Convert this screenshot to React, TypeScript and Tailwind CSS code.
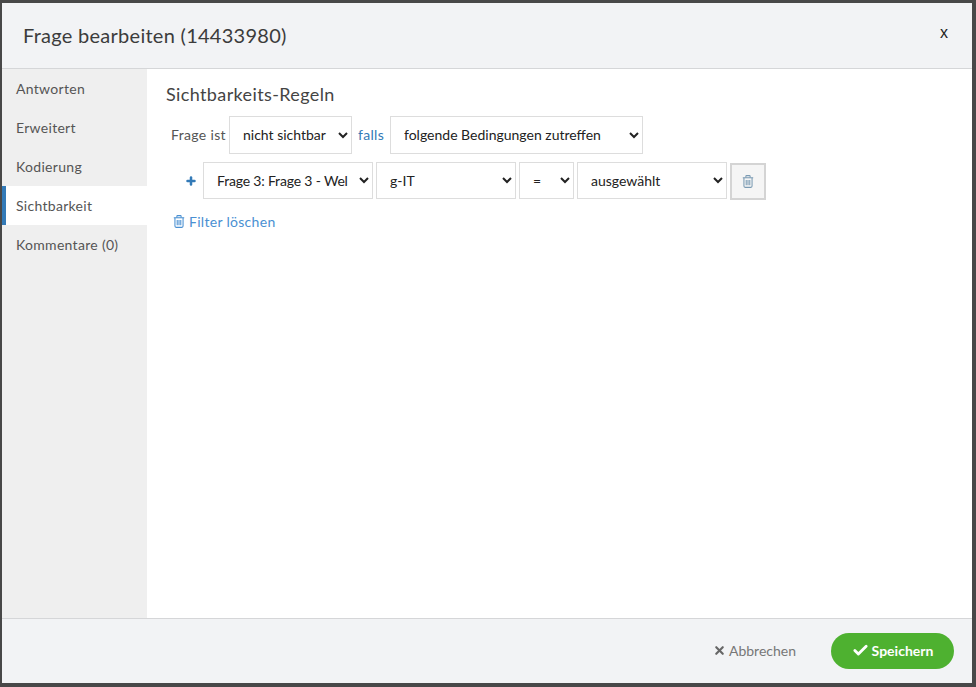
import { Check, Plus, X } from "lucide-react";

const tabs = ["Antworten", "Erweitert", "Kodierung", "Sichtbarkeit", "Kommentare (0)"];

function TrashIcon({ className }: { className: string }) {
  return (
    <svg viewBox="0 0 14 16" className={className} fill="none" stroke="currentColor" strokeWidth="1.3">
      <path d="M0.6 3.4h12.8" />
      <path d="M4.4 3.2V1.6c0-.4.3-.8.8-.8h3.6c.5 0 .8.4.8.8v1.6" />
      <path d="M2 3.6v10c0 .9.6 1.6 1.4 1.6h7.2c.8 0 1.4-.7 1.4-1.6v-10" />
      <path d="M4.8 6v6.6M7 6v6.6M9.2 6v6.6" />
    </svg>
  );
}

function Select({ value, className }: { value: string; className: string }) {
  return (
    <select
      defaultValue={value}
      className={`bg-white border border-[#ddd] pl-[9px] text-[14px] text-[#222] outline-none ${className}`}
    >
      <option>{value}</option>
    </select>
  );
}

export default function App() {
  return (
    <div className="h-[687px] w-[976px] overflow-hidden bg-[#484848] pt-[3px] pl-[2px] font-['Lato',sans-serif]">
      <div className="flex h-[680px] w-[970px] flex-col bg-white text-[#444]">
        <div className="flex h-[66px] shrink-0 items-center justify-between border-b border-[#d5d6d8] bg-[#f2f3f5] pl-[21px] pr-[24px]">
          <h1 className="mb-[2px] text-[20px] tracking-[0.27px] text-[#3c3c3c]">Frage bearbeiten (14433980)</h1>
          <span className="mb-[5px] text-[16px] text-[#222] font-['Liberation_Sans',sans-serif]">x</span>
        </div>

        <div className="flex min-h-0 flex-1">
          <div className="w-[145px] shrink-0 bg-[#efefef]">
            {tabs.map((tab) => (
              <div
                key={tab}
                className={
                  tab === "Sichtbarkeit"
                    ? "flex h-[39px] items-center border-l-4 border-[#337ab7] bg-white pb-[1px] pl-[10px] text-[14px] tracking-[0.3px] text-[#555]"
                    : "flex h-[39px] items-center pb-[1px] pl-[14px] text-[14px] tracking-[0.3px] text-[#555]"
                }
              >
                {tab}
              </div>
            ))}
          </div>

          <div className="flex-1 pl-[20px] pt-[14px]">
            <h2 className="-ml-[1px] text-[18px] leading-[22px] tracking-[0.38px] text-[#444]">Sichtbarkeits-Regeln</h2>

            <div className="mt-[11px] flex items-center pl-[4px] text-[14px]">
              <span className="mb-[2px] mr-[3px] tracking-[0.35px] text-[#555]">Frage ist</span>
              <Select value="nicht sichtbar" className="h-[38px] w-[123px] pb-[2px]" />
              <span className="mb-[2px] ml-[6px] mr-[6px] tracking-[0.3px] text-[#337ab7]">falls</span>
              <Select value="folgende Bedingungen zutreffen" className="h-[38px] w-[253px] pb-[2px]" />
            </div>

            <div className="mt-[8px] flex items-start gap-[3px] pl-[18px]">
              <span className="mr-[3px] flex h-[37px] w-[12px] items-center justify-center text-[#337ab7]">
                <Plus className="h-[12px] w-[12px]" strokeWidth={5} />
              </span>
              <Select value="Frage 3: Frage 3 - Wel" className="h-[37px] w-[170px] tracking-[-0.18px]" />
              <Select value="g-IT" className="h-[37px] w-[140px]" />
              <Select value="=" className="h-[37px] w-[55px]" />
              <Select value="ausgewählt" className="h-[37px] w-[150px]" />
              <button className="mt-[1px] flex h-[37px] w-[36px] items-center justify-center border-2 border-[#d4d4d4] bg-[#f5f5f5] text-[#7b9bb3]">
                <TrashIcon className="h-[13px] w-[12px]" />
              </button>
            </div>

            <div className="mt-[11px] flex items-center gap-[4px] pl-[6px] text-[14px] tracking-[0.3px] text-[#4a90d2]">
              <TrashIcon className="h-[13px] w-[12px]" />
              <span>Filter löschen</span>
            </div>
          </div>
        </div>

        <div className="flex h-[65px] shrink-0 items-center justify-end border-t border-[#d5d6d8] bg-[#f2f3f5] pr-[18px]">
          <button className="mr-[35px] flex items-center gap-[3px] pb-[1px] text-[14px] text-[#777]">
            <X className="h-[13px] w-[13px] text-[#666]" strokeWidth={4} />
            Abbrechen
          </button>
          <button className="flex h-[36px] w-[123px] items-center justify-center gap-[3px] rounded-full bg-[#4eb130] pb-[1px] text-[14px] font-bold text-white">
            <Check className="h-[17px] w-[17px]" strokeWidth={4} />
            Speichern
          </button>
        </div>
      </div>
    </div>
  );
}
